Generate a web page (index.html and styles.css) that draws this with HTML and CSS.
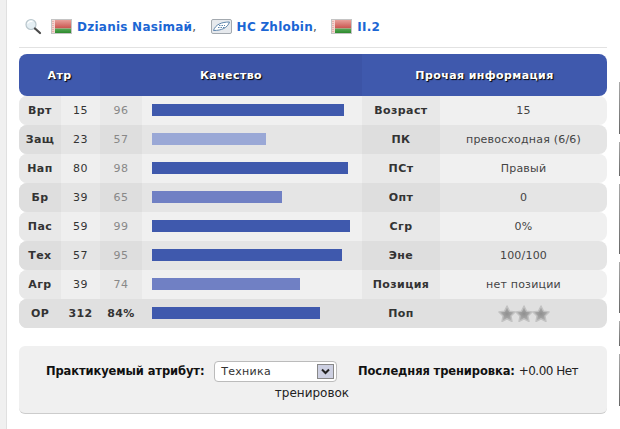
FILE: index.html
```html
<!DOCTYPE html>
<html lang="ru">
<head>
<meta charset="UTF-8">
<title>Dzianis Nasimaй</title>
<link rel="stylesheet" href="styles.css">
</head>
<body>
<svg class="defs" width="0" height="0">
  <defs>
    <linearGradient id="flagRed" x1="0" y1="0" x2="0" y2="1">
      <stop offset="0" stop-color="#e8a09a"/>
      <stop offset="1" stop-color="#c9524c"/>
    </linearGradient>
    <linearGradient id="flagGreen" x1="0" y1="0" x2="0" y2="1">
      <stop offset="0" stop-color="#5aa85a"/>
      <stop offset="1" stop-color="#2c8a2c"/>
    </linearGradient>
    <radialGradient id="starFill">
      <stop offset="0" stop-color="#8f8f8f"/>
      <stop offset="1" stop-color="#b4b4b4"/>
    </radialGradient>
    <symbol id="flag" viewBox="0 0 21 15">
      <rect x="0.5" y="0.5" width="20" height="14" fill="#fff" stroke="#c4c4c4"/>
      <rect x="1" y="1" width="19" height="8.5" fill="url(#flagRed)"/>
      <rect x="1" y="9.5" width="19" height="4.5" fill="url(#flagGreen)"/>
      <rect x="1" y="1" width="3" height="13" fill="#f3d6d2"/>
      <path d="M2 2v11" stroke="#d98a84" stroke-dasharray="1 1"/>
    </symbol>
    <symbol id="star" viewBox="0 0 18 17">
      <path d="M9 1l2.500 5.100 5.600.8-4.100 4 1 5.600L9 13.800l-5 2.700 1-5.600-4.100-4 5.600-.8z" fill="url(#starFill)" stroke="#c2c2c2" stroke-width="1.400" stroke-linejoin="round"/>
    </symbol>
  </defs>
</svg>

<div class="page">
  <div class="rail-left"></div>

  <main class="content">
    <div class="crumbs">
      <svg class="icon-search" width="18" height="17" viewBox="0 0 18 17">
        <circle cx="7" cy="6.500" r="5" fill="#e4eef3" stroke="#b9c6cc" stroke-width="1.200"/>
        <path d="M3.500 5.500c1-2 3-2.500 5-2" fill="none" stroke="#fff" stroke-width="1.200"/>
        <path d="M11 10.500l5 4.500" stroke="#4a4a4a" stroke-width="2.200" stroke-linecap="round"/>
      </svg>
      <svg class="icon-flag" width="21" height="15"><use href="#flag"/></svg>
      <a class="crumb-link" href="#">Dzianis Nasimaй</a><span class="comma">,</span>
      <svg class="icon-team" width="21" height="15" viewBox="0 0 21 15">
        <rect x="0.500" y="0.500" width="20" height="14" rx="1.500" fill="#e6e9ed" stroke="#a3a9af"/>
        <path d="M2.500 11.500c2-6 8-8.500 16-8.500-2 6-8 8.500-16 8.500z" fill="#fff" stroke="#5f86ad"/>
        <path d="M7 8.500h7M8 6.500h6" stroke="#5f86ad" stroke-dasharray="1.500 1"/>
      </svg>
      <a class="crumb-link" href="#">HC Zhlobin</a><span class="comma">,</span>
      <svg class="icon-flag" width="21" height="15"><use href="#flag"/></svg>
      <a class="crumb-link" href="#">II.2</a>
    </div>

    <section class="stats">
      <div class="row head">
        <div class="head-attr">Атр</div>
        <div class="head-quality">Качество</div>
        <div class="head-info">Прочая информация</div>
      </div>

      <div class="row">
        <div class="name">Врт</div><div class="val">15</div><div class="qual">96</div>
        <div class="bar-cell"><div class="bar hi" style="width:192px"></div></div>
        <div class="name">Возраст</div><div class="info">15</div>
      </div>
      <div class="row">
        <div class="name">Защ</div><div class="val">23</div><div class="qual">57</div>
        <div class="bar-cell"><div class="bar lo" style="width:114px"></div></div>
        <div class="name">ПК</div><div class="info">превосходная (6/6)</div>
      </div>
      <div class="row">
        <div class="name">Нап</div><div class="val">80</div><div class="qual">98</div>
        <div class="bar-cell"><div class="bar hi" style="width:196px"></div></div>
        <div class="name">ПСт</div><div class="info">Правый</div>
      </div>
      <div class="row">
        <div class="name">Бр</div><div class="val">39</div><div class="qual">65</div>
        <div class="bar-cell"><div class="bar mid" style="width:130px"></div></div>
        <div class="name">Опт</div><div class="info">0</div>
      </div>
      <div class="row">
        <div class="name">Пас</div><div class="val">59</div><div class="qual">99</div>
        <div class="bar-cell"><div class="bar hi" style="width:198px"></div></div>
        <div class="name">Сгр</div><div class="info">0%</div>
      </div>
      <div class="row">
        <div class="name">Тех</div><div class="val">57</div><div class="qual">95</div>
        <div class="bar-cell"><div class="bar hi" style="width:190px"></div></div>
        <div class="name">Эне</div><div class="info">100/100</div>
      </div>
      <div class="row">
        <div class="name">Агр</div><div class="val">39</div><div class="qual">74</div>
        <div class="bar-cell"><div class="bar mid" style="width:148px"></div></div>
        <div class="name">Позиция</div><div class="info">нет позиции</div>
      </div>
      <div class="row total">
        <div class="name">ОР</div><div class="val">312</div><div class="qual">84%</div>
        <div class="bar-cell"><div class="bar hi" style="width:168px"></div></div>
        <div class="name">Поп</div>
        <div class="info stars">
          <svg width="18" height="17"><use href="#star"/></svg>
          <svg width="18" height="17"><use href="#star"/></svg>
          <svg width="18" height="17"><use href="#star"/></svg>
        </div>
      </div>
    </section>

    <section class="training">
      <b>Практикуемый атрибут:</b>
      <span class="select">
        <span class="select-text">Техника</span>
        <span class="select-btn">
          <svg width="9" height="7" viewBox="0 0 9 7"><path d="M1 1.500l3.500 3.500 3.500-3.500" fill="none" stroke="#222" stroke-width="2"/></svg>
        </span>
      </span>
      <b>Последняя тренировка:</b> <span class="gain">+0.00 Нет</span> тренировок
    </section>
  </main>

  <div class="rail-right">
    <i style="height:52px"></i>
    <i style="height:34px"></i>
    <i style="height:70px"></i>
    <i style="height:51px"></i>
    <i style="height:25px"></i>
    <i style="height:52px"></i>
  </div>
</div>
</body>
</html>
```

FILE: styles.css
```css
html, body {
    margin: 0;
    padding: 0;
    background: #fff;
}
body {
    font-family: "DejaVu Sans", Verdana, sans-serif;
    font-size: 11px;
    color: #333;
    height: 429px;
    overflow: hidden;
}
.defs {
    display: block;
    height: 0;
}
.page {
    display: flex;
    width: 620px;
    height: 429px;
}
.rail-left {
    width: 6px;
    background: #f0f0f0;
    border-right: 1px solid #e0e0e0;
}
.content {
    width: 590px;
    margin-left: 12px;
}
.rail-right {
    margin-left: 12px;
    width: 1px;
    padding-top: 82px;
    display: flex;
    flex-direction: column;
    gap: 8px;
}
.rail-right i {
    display: block;
    width: 1px;
    background: linear-gradient(#aaa, #666);
}

/* top links */
.crumbs {
    display: flex;
    align-items: center;
    height: 48px;
    padding: 6px 0 0 5px;
    box-sizing: border-box;
    border-bottom: 1px solid #e2e2e2;
}
.icon-search {
    margin-right: 9px;
}
.icon-flag, .icon-team {
    margin-right: 5px;
}
.crumb-link {
    color: #1b66d4;
    font-size: 12px;
    font-weight: bold;
    text-decoration: none;
    letter-spacing: 0.25px;
}
.comma {
    margin-right: 14.5px;
    color: #555;
    font-size: 12px;
}

/* stats table */
.stats {
    margin-top: 6px;
}
.row {
    display: grid;
    grid-template-columns: 42px 39px 42px 220px 78px 1fr;
    height: 29px;
    border-radius: 8px;
    overflow: hidden;
    background: #f0f0f0;
    text-align: center;
    line-height: 30px;
}
.row:nth-child(odd) {
    background: #e5e5e5;
}
.name {
    background: #e8e8e8;
    font-weight: bold;
    letter-spacing: 0.4px;
}
.row:nth-child(odd) .name {
    background: #dedede;
}
.val {
    background: #efefef;
    letter-spacing: 0.4px;
}
.row:nth-child(odd) .val {
    background: #e5e5e5;
}
.qual {
    background: #e9e9e9;
    color: #888;
    letter-spacing: 0.4px;
}
.row:nth-child(odd) .qual {
    background: #dedede;
}
.info {
    color: #444;
    letter-spacing: 0.2px;
}
.bar-cell {
    padding: 8px 0 0 10px;
}
.bar {
    height: 12px;
}
.hi {
    background: #3f59ad;
}
.mid {
    background: #7080c4;
}
.lo {
    background: #9aa8d6;
}

.row.head {
    height: 42px;
    line-height: 43px;
    grid-template-columns: 81px 262px 1fr;
    background: #3f59ad;
    color: #fff;
    font-weight: bold;
    font-size: 11px;
    letter-spacing: 0.4px;
    text-shadow: 1px 1px 1px #000;
}
.head-quality {
    background: #3c54a6;
}

.row.total,
.row.total .name,
.row.total .val,
.row.total .qual {
    background: #e0e0e0;
}
.row.total .val, .row.total .qual {
    color: #333;
    font-weight: bold;
}
.stars {
    display: flex;
    justify-content: center;
    align-items: center;
    padding-bottom: 1px;
}
.stars svg {
    margin: 0 -0.5px;
}

/* training panel */
.training {
    margin-top: 18px;
    height: 68px;
    box-sizing: border-box;
    padding: 14px 18px 0 16px;
    background: #f0f0f0;
    border-bottom: 1px solid #ccc;
    border-radius: 6px;
    text-align: center;
    font-size: 12px;
    line-height: 22px;
    color: #222;
}
.training b {
    color: #111;
    font-size: 11.5px;
    letter-spacing: -0.1px;
}
.gain {
    letter-spacing: -0.5px;
}
.select {
    display: inline-flex;
    align-items: center;
    justify-content: space-between;
    box-sizing: border-box;
    width: 123px;
    height: 21px;
    margin: 0 17px 0 6px;
    padding: 0 2px 0 6px;
    background: #fff;
    border: 1px solid #bbb;
    border-radius: 4px;
    vertical-align: middle;
    font-size: 11px;
    letter-spacing: 0.3px;
    color: #333;
    text-align: left;
}
.select-btn {
    display: flex;
    align-items: center;
    justify-content: center;
    width: 17px;
    height: 15px;
    box-sizing: border-box;
    background: #cdd0e2;
    border: 1px solid #888;
}
```
